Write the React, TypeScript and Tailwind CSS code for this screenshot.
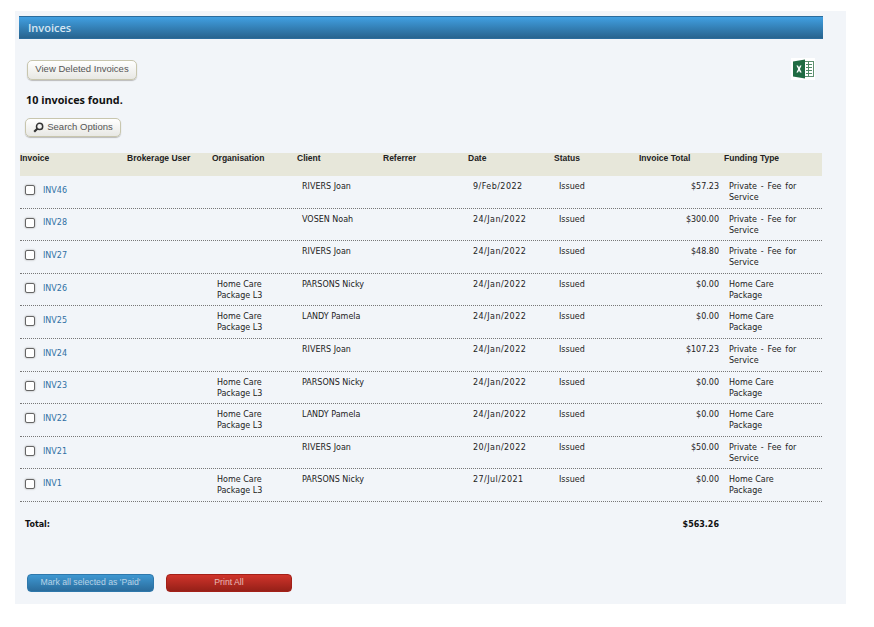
const invoices = [
  { id: "INV46", org: "", client: "RIVERS Joan", date: "9/Feb/2022", total: "$57.23", funding: "Private - Fee for Service" },
  { id: "INV28", org: "", client: "VOSEN Noah", date: "24/Jan/2022", total: "$300.00", funding: "Private - Fee for Service" },
  { id: "INV27", org: "", client: "RIVERS Joan", date: "24/Jan/2022", total: "$48.80", funding: "Private - Fee for Service" },
  { id: "INV26", org: "Home Care Package L3", client: "PARSONS Nicky", date: "24/Jan/2022", total: "$0.00", funding: "Home Care Package" },
  { id: "INV25", org: "Home Care Package L3", client: "LANDY Pamela", date: "24/Jan/2022", total: "$0.00", funding: "Home Care Package" },
  { id: "INV24", org: "", client: "RIVERS Joan", date: "24/Jan/2022", total: "$107.23", funding: "Private - Fee for Service" },
  { id: "INV23", org: "Home Care Package L3", client: "PARSONS Nicky", date: "24/Jan/2022", total: "$0.00", funding: "Home Care Package" },
  { id: "INV22", org: "Home Care Package L3", client: "LANDY Pamela", date: "24/Jan/2022", total: "$0.00", funding: "Home Care Package" },
  { id: "INV21", org: "", client: "RIVERS Joan", date: "20/Jan/2022", total: "$50.00", funding: "Private - Fee for Service" },
  { id: "INV1", org: "Home Care Package L3", client: "PARSONS Nicky", date: "27/Jul/2021", total: "$0.00", funding: "Home Care Package" },
];

const headers = ["Invoice", "Brokerage User", "Organisation", "Client", "Referrer", "Date", "Status", "Invoice Total", "Funding Type"];
const cols = "grid grid-cols-[107px_85px_85px_86px_85px_86px_85px_85px_98px]";

const ExcelIcon = () => (
  <svg width="24" height="22" viewBox="0 0 24 22">
    <rect width="24" height="22" fill="#fff" />
    <rect x="11" y="3.5" width="11.5" height="15" fill="#fff" stroke="#5d8f70" strokeWidth="1" />
    <path d="M15 6.5h6M15 9.5h6M15 12.5h6M15 15.5h6M17.5 4v14" stroke="#4f8a66" strokeWidth="1" fill="none" />
    <path d="M2 3.6 14 1.5v19L2 18.4z" fill="#1f6b42" />
    <path d="M5.4 7.4h1.6l1 2 1-2h1.6L8.9 11l1.8 3.6H9l-1-2.1-1 2.1H5.4L7.2 11z" fill="#fff" />
  </svg>
);

const SearchIcon = () => (
  <svg width="11" height="11" viewBox="0 0 11 11">
    <circle cx="6.6" cy="4.4" r="3.1" fill="none" stroke="#333" strokeWidth="1.5" />
    <path d="M4.3 6.7 1.2 9.8" stroke="#333" strokeWidth="2.2" />
  </svg>
);

export default function App() {
  return (
    <div className="min-h-[627px] bg-white pt-[11px] pl-[15px] font-['Liberation_Sans',sans-serif]">
      <div className="w-[831px] h-[593px] bg-[#f2f5f9] pt-[5px] pl-[4px]">
        <div className="w-[804px] h-[23px] flex items-center pl-[9px] pt-[2px] border-t border-b border-[#2b6c9c] bg-gradient-to-b from-[#41a0e2] to-[#28648f] text-[#d5e6f2] text-[11px] font-semibold font-['Open_Sans',sans-serif]">
          Invoices
        </div>

        <div className="w-[804px] flex justify-between items-start pl-[8px] pr-[8px] mt-[21px]">
          <button className="w-[110px] h-[20px] pb-px rounded-[5px] border border-[#c8c6ae] bg-gradient-to-b from-white to-[#e8e8e4] shadow-[0_1px_1px_#bbb] text-[9.5px] text-[#555]">
            View Deleted Invoices
          </button>
          <div className="-mt-[2px] -mb-[2px]">
            <ExcelIcon />
          </div>
        </div>

        <p className="mt-[13px] ml-[7px] text-[10.8px] leading-[14px] font-bold text-[#111] font-['Open_Sans',sans-serif]">
          10 invoices found.
        </p>

        <button className="mt-[11px] ml-[6px] w-[96px] h-[19px] flex items-center justify-center gap-[3px] rounded-[5px] border border-[#c8c6ae] bg-gradient-to-b from-white to-[#e8e8e4] shadow-[0_1px_1px_#bbb] text-[9.5px] text-[#555]">
          <SearchIcon />
          Search Options
        </button>

        <div className="w-[802px] ml-px mt-[16px]">
          <div className={`${cols} h-[23px] bg-[#e7e7da] text-[8.5px] font-bold text-[#222] leading-[11px]`}>
            {headers.map((h) => (
              <div key={h}>{h}</div>
            ))}
          </div>

          {invoices.map((inv) => (
            <div
              key={inv.id}
              className={`${cols} h-[32.6px] border-b border-dotted border-[#777] text-[8px] leading-[11px] text-[#222] font-['DejaVu_Sans',sans-serif]`}
            >
              <div className="flex items-center gap-[8px] pl-[5px] pb-[5px] pt-[2px]">
                <span className="w-[10px] h-[10px] rounded-[2px] border border-[#666] bg-white shadow-[0_0_2px_#999]" />
                <a className="text-[#2f6fa3]">{inv.id}</a>
              </div>
              <div />
              <div className="pl-[5px] pt-[5px]">{inv.org}</div>
              <div className="pl-[5px] pt-[5px]">{inv.client}</div>
              <div />
              <div className="pl-[5px] pt-[5px] tracking-[0.45px]">{inv.date}</div>
              <div className="pl-[5px] pt-[5px]">Issued</div>
              <div className="pr-[5px] pt-[5px] text-right">{inv.total}</div>
              <div className={inv.org ? "pl-[5px] pr-[18px] pt-[5px]" : "pl-[5px] pr-[14px] pt-[5px] [word-spacing:1.3px]"}>{inv.funding}</div>
            </div>
          ))}

          <div className={`${cols} mt-[17px] text-[8px] leading-[11px] font-bold text-[#111] font-['DejaVu_Sans',sans-serif]`}>
            <div className="pl-[5px]">Total:</div>
            <div className="col-start-8 pr-[5px] text-right">$563.26</div>
          </div>
        </div>

        <div className="flex gap-[12px] ml-[8px] mt-[44px]">
          <button className="w-[127px] h-[18px] rounded-[4px] border border-[#2f78ab] bg-gradient-to-b from-[#3f98d2] to-[#2a6c9c] text-[8.7px] text-[#b9d3e6]">
            Mark all selected as 'Paid'
          </button>
          <button className="w-[126px] h-[18px] rounded-[4px] border border-[#a32018] bg-gradient-to-b from-[#d0342b] to-[#962018] text-[8.7px] text-[#e8bcb8]">
            Print All
          </button>
        </div>
      </div>
    </div>
  );
}
